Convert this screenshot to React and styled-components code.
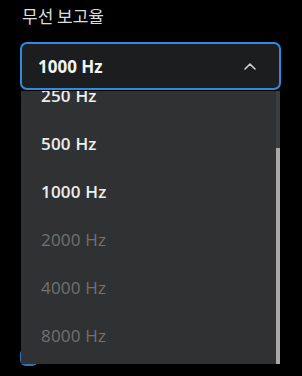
import React from 'react';
import styled, { createGlobalStyle } from 'styled-components';

const GlobalStyle = createGlobalStyle`
    html, body {
        margin: 0;
        padding: 0;
        background: #000;
    }
`;

const Page = styled.div`
    box-sizing: border-box;
    width: 302px;
    height: 376px;
    padding: 5px 21px 0 20px;
    background: #000;
    overflow: hidden;
    font-family: "Open Sans", "Noto Sans", sans-serif;
`;

const Label = styled.div`
    font-family: "Noto Sans CJK KR", "Noto Sans", sans-serif;
    font-size: 17px;
    line-height: 22px;
    color: #dcdcdc;
    padding-left: 2px;
    margin-bottom: 15px;
`;

const Field = styled.div`
    position: relative;
`;

const SelectBox = styled.div`
    position: relative;
    z-index: 2;
    box-sizing: border-box;
    height: 48px;
    display: flex;
    align-items: center;
    justify-content: space-between;
    padding: 0 23px 0 16px;
    background: #1c1d1e;
    border: 2px solid #2d8ce0;
    border-radius: 7px;
    color: #f2f2f2;
    font-size: 17px;
    font-weight: 700;
`;

const Chevron = styled.svg`
    width: 12px;
    height: 7px;
    display: block;
`;

const Menu = styled.div`
    position: absolute;
    z-index: 1;
    top: 49px;
    left: 1px;
    right: 1px;
    height: 273px;
    background: #303132;
    overflow: hidden;
`;

const List = styled.div`
    transform: translateY(-20px);
`;

const Item = styled.div`
    height: 48px;
    display: flex;
    align-items: center;
    padding-left: 20px;
    font-size: 17px;
    font-weight: ${p => (p.$disabled ? 400 : 600)};
    color: ${p => (p.$disabled ? '#717171' : '#eeeeee')};
    letter-spacing: 0.2px;
`;

const Track = styled.div`
    position: absolute;
    top: 0;
    right: 0;
    bottom: 0;
    width: 4px;
    background: #3c3d3e;
`;

const Thumb = styled.div`
    position: absolute;
    top: 57px;
    left: 0;
    right: 0;
    bottom: 0;
    background: #a8a8a8;
`;

const Check = styled.div`
    box-sizing: border-box;
    width: 18px;
    height: 18px;
    margin: 258px 0 0 0;
    border-radius: 6px;
    border: 2px solid #2a74b8;
    border-right-color: transparent;
`;

const rates = [
    { label: '250 Hz' },
    { label: '500 Hz' },
    { label: '1000 Hz' },
    { label: '2000 Hz', disabled: true },
    { label: '4000 Hz', disabled: true },
    { label: '8000 Hz', disabled: true },
];

export default function App() {
    return (
        <>
            <GlobalStyle />
            <Page>
                <Label>무선 보고율</Label>
                <Field>
                    <SelectBox>
                        <span>1000 Hz</span>
                        <Chevron viewBox="0 0 12 7">
                            <path d="M1 6 L6 1.2 L11 6" fill="none" stroke="#cfcfcf" strokeWidth="1.6" strokeLinecap="round" strokeLinejoin="round" />
                        </Chevron>
                    </SelectBox>
                    <Menu>
                        <List>
                            {rates.map(r => (
                                <Item key={r.label} $disabled={r.disabled}>{r.label}</Item>
                            ))}
                        </List>
                        <Track>
                            <Thumb />
                        </Track>
                    </Menu>
                </Field>
                <Check />
            </Page>
        </>
    );
}
